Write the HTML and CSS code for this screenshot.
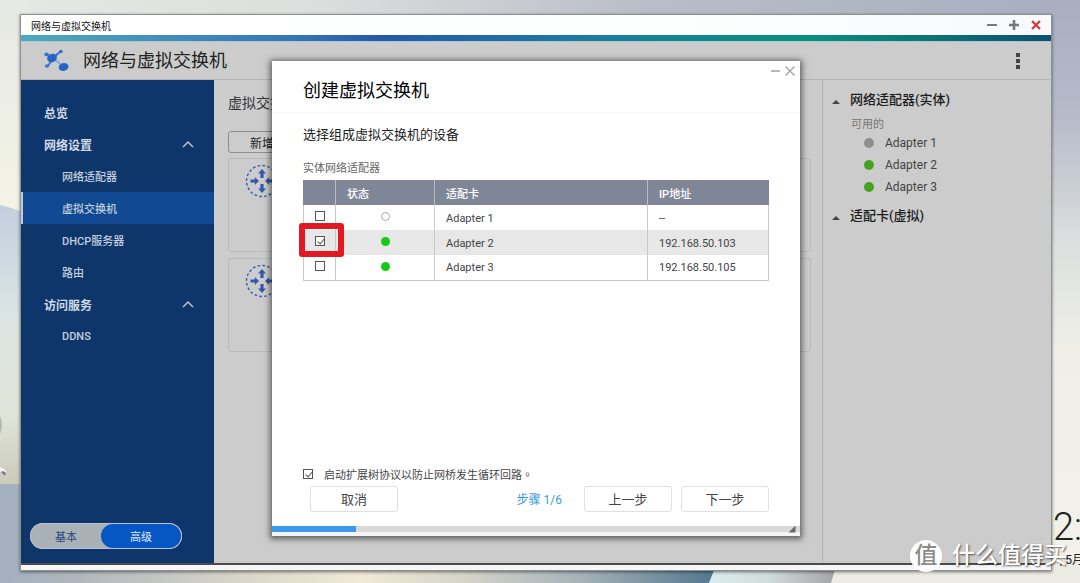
FILE: index.html
```html
<!DOCTYPE html>
<html lang="zh-CN">
<head>
<meta charset="utf-8">
<meta name="viewport" content="width=device-width, initial-scale=1">
<title>网络与虚拟交换机</title>
<link rel="stylesheet" href="styles.css">
</head>
<body>
<div class="desktop">
  <svg class="wallpaper" viewBox="0 0 1080 583" preserveAspectRatio="none" aria-hidden="true">
    <defs>
      <linearGradient id="sky" x1="0" y1="0" x2="1" y2="0">
        <stop offset="0" stop-color="#e6e8e3"/><stop offset=".3" stop-color="#dcdedd"/><stop offset=".6" stop-color="#b9bdc7"/><stop offset="1" stop-color="#a8aec0"/>
      </linearGradient>
      <linearGradient id="leftTop" x1="0" y1="0" x2="0" y2="1">
        <stop offset="0" stop-color="#e6e8e3"/><stop offset="1" stop-color="#f4f4e6"/>
      </linearGradient>
      <linearGradient id="leftHill" x1="0" y1="0" x2="0" y2="1">
        <stop offset="0" stop-color="#c2cfdf"/><stop offset=".4" stop-color="#dbe5e3"/><stop offset=".75" stop-color="#e1e4d9"/><stop offset="1" stop-color="#c9cab9"/>
      </linearGradient>
      <linearGradient id="right" x1="0" y1="0" x2="0" y2="1">
        <stop offset="0" stop-color="#a8aec0"/><stop offset=".2" stop-color="#b5bbc9"/><stop offset=".42" stop-color="#dde0df"/><stop offset=".6" stop-color="#efefe8"/><stop offset="1" stop-color="#f2f2ea"/>
      </linearGradient>
      <linearGradient id="floor" x1="0" y1="0" x2="1" y2="0">
        <stop offset="0" stop-color="#a3b0c0"/><stop offset=".1" stop-color="#afb6bc"/><stop offset=".36" stop-color="#ddd9cb"/><stop offset=".5" stop-color="#f0ead6"/><stop offset=".64" stop-color="#d6d5ca"/><stop offset=".8" stop-color="#a8b4b9"/><stop offset="1" stop-color="#50758e"/>
      </linearGradient>
      <linearGradient id="glass" x1="0" y1="0" x2="1" y2="0">
        <stop offset="0" stop-color="#d9ecec"/><stop offset=".45" stop-color="#d3dddd"/><stop offset="1" stop-color="#a3a2a4"/>
      </linearGradient>
    </defs>
    <rect width="1080" height="583" fill="url(#sky)"/>
    <rect y="0" width="30" height="220" fill="url(#leftTop)"/>
    <path d="M0 205Q10 207 22 212V486H0Z" fill="url(#leftHill)"/>
    <path d="M1040 0H1080V583H1040Z" fill="url(#right)"/>
    <path d="M0 484H30V560H720L709 583H0Z" fill="url(#floor)"/>
    <path d="M718 560H838L831 583H709Z" fill="url(#glass)"/>
    <path d="M838 560H1080V583H831Z" fill="#ecebe4"/>
    <path d="M0 467L4 469Q8 473 5 476L0 471Z" fill="#f4f4f4"/>
    <path d="M1 472L5 476L6 473L3 471Z" fill="#777"/>
    <path d="M0 416Q4 425 0 434Z" fill="#b9baaf"/>
  </svg>

  <section class="window">
    <header class="titlebar">
      <span>网络与虚拟交换机</span>
      <div class="window-controls">
        <button aria-label="最小化"><svg viewBox="0 0 12 12"><path d="M1 6H11" stroke="#737b80" stroke-width="2"/></svg></button>
        <button aria-label="最大化"><svg viewBox="0 0 12 12"><path d="M1 6H11M6 1V11" stroke="#737b80" stroke-width="2.6"/></svg></button>
        <button aria-label="关闭"><svg viewBox="0 0 12 12"><path d="M2 2L10 10M10 2L2 10" stroke="#d63a36" stroke-width="2.2"/></svg></button>
      </div>
    </header>
    <div class="accent"></div>

    <div class="app">
      <header class="app-header">
        <svg class="logo" viewBox="0 0 28 24" aria-hidden="true">
          <path d="M3 5L10 9L18 2M10 9L5 17M10 9L21 18" fill="none" stroke="#8fb0df" stroke-width="2.6"/>
          <path d="M10 9L18 2M5 17L10 9" stroke="#2a66c6" stroke-width="1.4"/>
          <ellipse cx="9" cy="9" rx="5" ry="4.2" fill="#2864c8" transform="rotate(-24 9 9)"/>
          <ellipse cx="3.6" cy="5.4" rx="2.3" ry="1.8" fill="#3670cb"/>
          <circle cx="18" cy="2.4" r="1.7" fill="#2e69c8"/>
          <ellipse cx="4" cy="17" rx="2.2" ry="1.8" fill="#3c76d0"/>
          <ellipse cx="20.6" cy="18" rx="5" ry="3.8" fill="#2864c8" transform="rotate(-15 20.6 18)"/>
        </svg>
        <h1>网络与虚拟交换机</h1>
        <button class="more" aria-label="更多"><i></i><i></i><i></i></button>
      </header>

      <div class="app-body">
        <aside class="sidebar">
          <nav>
            <a class="nav-main" href="#">总览</a>
            <a class="nav-main" href="#">网络设置<svg class="chevron" viewBox="0 0 12 8"><path d="M1 7L6 2L11 7"/></svg></a>
            <a class="nav-sub" href="#">网络适配器</a>
            <a class="nav-sub selected" href="#">虚拟交换机</a>
            <a class="nav-sub" href="#">DHCP服务器</a>
            <a class="nav-sub" href="#">路由</a>
            <a class="nav-main" href="#">访问服务<svg class="chevron" viewBox="0 0 12 8"><path d="M1 7L6 2L11 7"/></svg></a>
            <a class="nav-sub" href="#">DDNS</a>
          </nav>
          <div class="mode">
            <button>基本</button>
            <button class="active">高级</button>
          </div>
        </aside>

        <main class="content">
          <h2>虚拟交换机</h2>
          <button class="add">新增</button>
          <article class="card">
            <svg class="switch-icon" viewBox="0 0 34 34" aria-hidden="true">
              <circle cx="17" cy="17" r="15.5" fill="none" stroke="#3159ac" stroke-width="1.4" stroke-dasharray="2.6 2.27"/>
              <g fill="#3159ac"><path d="M17 5L21 9.5H18.6V14H15.4V9.5H13Z"/><path d="M17 29L21 24.5H18.6V20H15.4V24.5H13Z"/><path d="M14 17L9.8 13V15.6H5.5V18.4H9.8V21Z"/><path d="M20 17L24.2 13V15.6H28.5V18.4H24.2V21Z"/></g>
            </svg>
          </article>
          <article class="card">
            <svg class="switch-icon" viewBox="0 0 34 34" aria-hidden="true">
              <circle cx="17" cy="17" r="15.5" fill="none" stroke="#3159ac" stroke-width="1.4" stroke-dasharray="2.6 2.27"/>
              <g fill="#3159ac"><path d="M17 5L21 9.5H18.6V14H15.4V9.5H13Z"/><path d="M17 29L21 24.5H18.6V20H15.4V24.5H13Z"/><path d="M14 17L9.8 13V15.6H5.5V18.4H9.8V21Z"/><path d="M20 17L24.2 13V15.6H28.5V18.4H24.2V21Z"/></g>
            </svg>
          </article>
        </main>

        <aside class="adapters">
          <h3>网络适配器(实体)</h3>
          <p>可用的</p>
          <ul>
            <li><span class="dot off"></span>Adapter 1</li>
            <li><span class="dot"></span>Adapter 2</li>
            <li><span class="dot"></span>Adapter 3</li>
          </ul>
          <h3>适配卡(虚拟)</h3>
        </aside>
      </div>
    </div>

    <div class="dialog" role="dialog" aria-labelledby="dialog-title">
      <header class="dialog-header">
        <h2 id="dialog-title">创建虚拟交换机</h2>
        <div class="dialog-controls">
          <button aria-label="最小化"><svg viewBox="0 0 12 12"><path d="M1 6H10" stroke="#a5a5a5" stroke-width="1.6"/></svg></button>
          <button aria-label="关闭"><svg viewBox="0 0 12 12"><path d="M1.5 1.5L10.5 10.5M10.5 1.5L1.5 10.5" stroke="#a0a0a0" stroke-width="1.3"/></svg></button>
        </div>
      </header>
      <div class="dialog-body">
        <h3>选择组成虚拟交换机的设备</h3>
        <table>
          <caption>实体网络适配器</caption>
          <colgroup><col class="col-check"><col class="col-status"><col class="col-name"><col class="col-ip"></colgroup>
          <thead><tr><th></th><th>状态</th><th>适配卡</th><th>IP地址</th></tr></thead>
          <tbody>
            <tr><td class="check"><input type="checkbox" aria-label="Adapter 1"></td><td class="status"><span class="led empty"></span></td><td>Adapter 1</td><td>--</td></tr>
            <tr class="picked"><td class="check marked"><input type="checkbox" aria-label="Adapter 2" checked></td><td class="status"><span class="led"></span></td><td>Adapter 2</td><td>192.168.50.103</td></tr>
            <tr><td class="check"><input type="checkbox" aria-label="Adapter 3"></td><td class="status"><span class="led"></span></td><td>Adapter 3</td><td>192.168.50.105</td></tr>
          </tbody>
        </table>
        <label class="stp"><input type="checkbox" checked><span lang="zh-TW">启动扩展树协议以防止网桥发生循环回路。</span></label>
      </div>
      <footer class="dialog-footer">
        <button>取消</button>
        <span class="step">步骤 1/6</span>
        <button>上一步</button>
        <button>下一步</button>
      </footer>
      <div class="progress">
        <div class="progress-fill"></div>
        <svg class="grip" viewBox="0 0 8 8" aria-hidden="true"><path d="M7.5 .5V7.5H.5Z" fill="#6b6b6b"/></svg>
      </div>
    </div>
  </section>

  <div class="clock"><span class="time">2:</span><span class="date">, 5月</span></div>
  <div class="watermark"><span class="seal">值</span><span>什么值得买</span></div>
</div>
</body>
</html>
```

FILE: styles.css
```css
* { box-sizing: border-box; }

body {
  margin: 0;
  font-family: Roboto, "Noto Sans CJK SC", sans-serif;
  font-size: 11px;
  color: #444;
}

h1, h2, h3, p, ul { margin: 0; padding: 0; font-weight: 400; }
ul { list-style: none; }
a { color: inherit; text-decoration: none; }
button { font: inherit; color: inherit; padding: 0; border: 0; background: none; }
svg { display: block; }

.desktop {
  position: relative;
  height: 100vh;
  padding: 15px 29px 13px 21px;
  overflow: hidden;
}

.wallpaper { position: absolute; inset: 0; width: 100%; height: 100%; }

/* Application window */
.window {
  position: relative;
  display: flex;
  flex-direction: column;
  height: 100%;
  padding-bottom: 5px;
  background: #f6f6f6;
  box-shadow: 0 0 0 1px #8d9193, 0 1px 3px 1px rgba(0, 0, 0, .5);
}

.titlebar {
  display: flex;
  justify-content: space-between;
  align-items: center;
  height: 20px;
  padding: 0 9px 0 10px;
  font-size: 10px;
  color: #111;
  background: linear-gradient(90deg, #fff, #fdfefe 60%, #f8f9fb);
}

.window-controls { display: flex; gap: 10px; }
.window-controls svg { width: 12px; height: 12px; }

.accent {
  height: 7px;
  background: linear-gradient(90deg, #4fa9bc, #3674b8 27%, #2458aa 35%, #1c7ca0 55%, #08917f 76%, #0b7478 88%, #0c5170);
  border-bottom: 1px solid #a9c9ce;
}

.app {
  display: flex;
  flex-direction: column;
  flex: 1;
  background: #ccc;
  border-bottom: 2px solid #4b4b4b;
}

.app-header {
  display: flex;
  align-items: center;
  height: 38px;
  padding: 0 26px 0 22px;
  border-bottom: 1px solid #b5b5b5;
}
.app-header h1 { flex: 1; margin-left: 12px; font-size: 18px; line-height: 24px; color: #222; }
.logo { width: 28px; height: 24px; }
.more { display: flex; flex-direction: column; gap: 2px; width: 14px; align-items: center; }
.more i { width: 4px; height: 4px; background: #444; }

.app-body { display: flex; flex: 1; }

/* Sidebar */
.sidebar {
  display: flex;
  flex-direction: column;
  justify-content: space-between;
  width: 193px;
  padding: 16px 0 14px;
  background: #0e366b;
  color: #c3cfdd;
}
.sidebar nav a { display: flex; align-items: center; height: 32px; }
.sidebar .nav-main { justify-content: space-between; padding: 0 20px 0 23px; font-size: 12px; font-weight: 700; color: #d2dae4; }
.sidebar .nav-sub { padding-left: 41px; font-weight: 500; }
.sidebar .selected { background: #114a92; box-shadow: inset 2px 0 #bccbdf; }
.chevron { width: 12px; height: 8px; fill: none; stroke: #b4c2d2; stroke-width: 1.5; }

.mode {
  display: flex;
  width: 152px;
  height: 26px;
  margin-left: 9px;
  padding: 1px;
  border-radius: 13px;
  background: #a9b1b7;
  box-shadow: inset 0 0 0 1px #b7c4d5;
  color: #24477b;
}
.mode button { flex: 0 0 70px; }
.mode .active { flex: 1; border-radius: 12px; background: #0656c5; color: #e2ebf7; }

/* Main content */
.content { flex: 1; padding: 11px 11px 0 14px; }
.content h2 { font-size: 14px; line-height: 24px; color: #333; }
.add {
  display: block;
  width: 68px;
  height: 22px;
  margin: 16px 0 5px;
  border: 1px solid #8f8f8f;
  border-radius: 3px;
  font-size: 12px;
  color: #222;
}
.card { height: 94px; margin-bottom: 6px; padding: 5px 16px; border: 1px solid #bababa; border-radius: 3px; }
.switch-icon { width: 34px; height: 34px; }

/* Adapter list */
.adapters { width: 229px; padding: 10px 9px; border-left: 1px solid #b2b2b2; }
.adapters h3 {
  display: flex;
  align-items: center;
  gap: 10px;
  font-size: 13px;
  font-weight: 500;
  line-height: 20px;
  color: #1c1c1c;
}
.adapters h3::before { content: ""; margin-top: 3px; border: 4px solid transparent; border-top: 0; border-bottom: 4px solid #444; }
.adapters p { padding-left: 19px; margin-top: 8px; line-height: 14px; color: #777; }
.adapters ul { padding-left: 32px; margin-bottom: 8px; }
.adapters li { display: flex; align-items: center; gap: 11px; height: 22px; font-size: 12px; }
.dot { width: 10px; height: 10px; border-radius: 50%; background: #46a321; }
.dot.off { background: #8e8e8e; }

/* Wizard dialog, centred over the window */
.dialog {
  position: absolute;
  top: 46px;
  bottom: 34px;
  left: 50%;
  display: flex;
  flex-direction: column;
  width: 528px;
  transform: translateX(-50%);
  background: #fff;
  box-shadow: 0 1px 6px 2px rgba(0, 0, 0, .55);
}
.dialog-header {
  display: flex;
  justify-content: space-between;
  height: 52px;
  padding: 4px 4px 0 31px;
  border-bottom: 1px solid #f9f9f9;
}
.dialog-header h2 { padding-top: 14px; font-size: 18px; line-height: 24px; color: #000; }
.dialog-controls { display: flex; align-items: flex-start; gap: 2px; }
.dialog-controls svg { width: 12px; height: 12px; }

.dialog-body { display: flex; flex-direction: column; flex: 1; padding: 12px 31px 4px; }
.dialog-body h3 { font-size: 13px; line-height: 20px; color: #222; }

table { width: 100%; margin-top: 16px; table-layout: fixed; border-collapse: collapse; }
caption { padding-bottom: 3px; line-height: 16px; text-align: left; color: #666; }
.col-check { width: 32px; }
.col-status { width: 99px; }
.col-ip { width: 121px; }
th { height: 25px; padding: 0 11px; text-align: left; font-weight: 500; color: #fff; background: #7f8797; border-left: 1px solid #b7bcc6; }
th:first-child { border-left-color: #7f8797; }
td { height: 25px; padding: 1px 11px 0; border: 1px solid #c9c9c9; border-width: 0 1px; }
tbody tr:last-child td { border-bottom-width: 1px; }
.picked { background: #e7e7e7; }
.check { padding: 0; text-align: center; }
.status { padding: 0; }

input[type="checkbox"] {
  position: relative;
  flex: none;
  appearance: none;
  display: block;
  width: 10px;
  height: 10px;
  margin: 0 auto;
  border: 1px solid #555;
  background: #fff;
}
input[type="checkbox"]:checked::after {
  content: "";
  position: absolute;
  top: 0;
  left: 3px;
  width: 3px;
  height: 6px;
  border: solid #555;
  border-width: 0 1px 1px 0;
  transform: rotate(40deg);
}
.check input { margin-bottom: 3px; }

.marked { position: relative; }
.marked::after {
  content: "";
  position: absolute;
  inset: -7px -9px -2px -5px;
  border: 6px solid #e11a22;
  border-radius: 3px;
}

.led { display: block; width: 9px; height: 9px; margin: 0 auto 2px; border-radius: 50%; background: #14cb14; }
.led.empty { border: 1px solid #aaa; background: none; }

.stp { display: flex; align-items: center; gap: 11px; margin-top: auto; line-height: 16px; }
.stp input { margin: 0; }
.stp span { font-family: "Noto Sans CJK TC", sans-serif; }

.dialog-footer { display: flex; align-items: center; padding: 0 31px 0 38px; margin-bottom: 14px; }
.dialog-footer button { width: 88px; height: 26px; padding-bottom: 2px; border: 1px solid #e0e0e0; border-radius: 3px; font-size: 13px; }
.dialog-footer button + button { margin-left: 9px; }
.step { margin: 0 22px 0 auto; padding-bottom: 2px; font-size: 12px; color: #3c9bd6; }

.progress { display: flex; justify-content: space-between; height: 10px; background: #d9d9d9; border-bottom: 4px solid #f4f4f4; }
.progress-fill { width: 16%; background: #3c98ee; }
.grip { width: 8px; height: 8px; margin: -1px 4px 0 0; }

/* Desktop clock, cut off by the screen edge */
.clock { position: absolute; top: 505px; left: 1053px; display: grid; color: #222; white-space: nowrap; }
.time { font-size: 38px; font-weight: 300; line-height: 44px; }
.date { padding-left: 7px; font-size: 12px; line-height: 22px; }

.watermark {
  position: absolute;
  right: 13px;
  bottom: 11px;
  display: flex;
  align-items: center;
  gap: 10px;
  font-size: 23px;
  font-weight: 500;
  line-height: 32px;
  color: #fff;
  text-shadow: 1px 1px 2px rgba(0, 0, 0, .6);
}
.seal {
  width: 32px;
  height: 32px;
  border-radius: 50%;
  background: #fff;
  color: #8b8b8b;
  text-align: center;
  text-shadow: none;
}
```
